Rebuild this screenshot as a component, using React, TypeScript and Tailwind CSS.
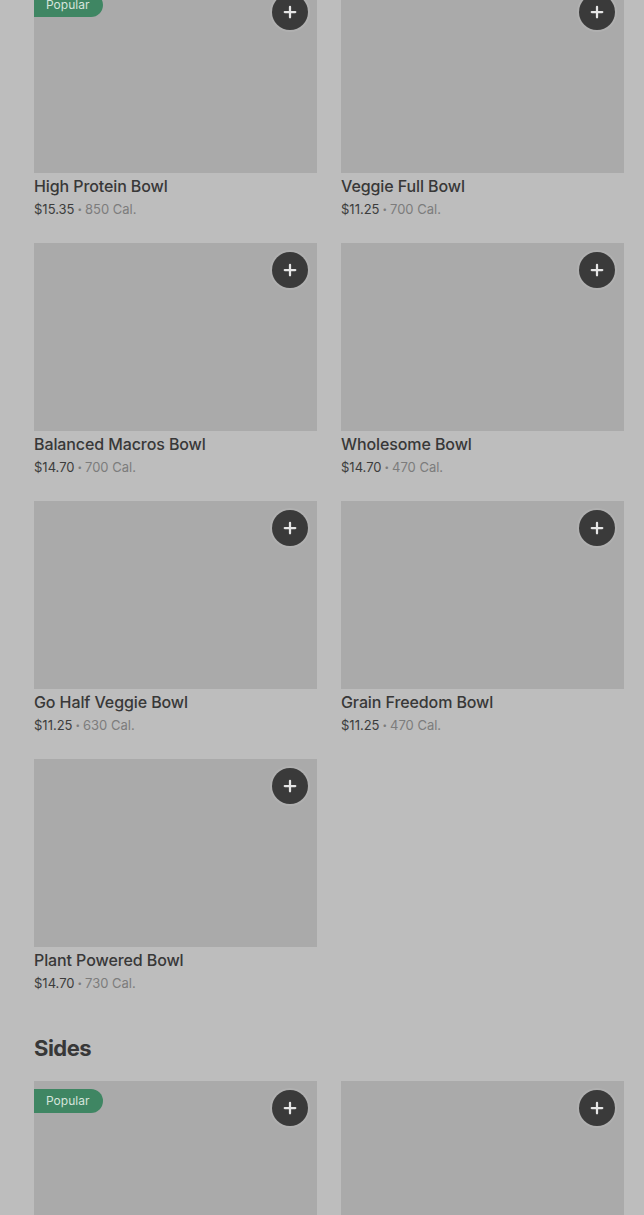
import { Plus } from "lucide-react"

const bowls = [
    { name: "High Protein Bowl", price: "$15.35", cal: "850 Cal.", popular: true },
    { name: "Veggie Full Bowl", price: "$11.25", cal: "700 Cal.", popular: false },
    { name: "Balanced Macros Bowl", price: "$14.70", cal: "700 Cal.", popular: false },
    { name: "Wholesome Bowl", price: "$14.70", cal: "470 Cal.", popular: false },
    { name: "Go Half Veggie Bowl", price: "$11.25", cal: "630 Cal.", popular: false },
    { name: "Grain Freedom Bowl", price: "$11.25", cal: "470 Cal.", popular: false },
    { name: "Plant Powered Bowl", price: "$14.70", cal: "730 Cal.", popular: false },
]

const sides = [
    { name: "", price: "", cal: "", popular: true },
    { name: "", price: "", cal: "", popular: false },
]

type Item = { name: string; price: string; cal: string; popular: boolean }

function ItemCard({ item }: { item: Item }) {
    return (
        <div>
            <div className="relative h-[188px] bg-[#aaaaaa]">
                {item.popular && (
                    <span className="absolute left-0 top-[8px] flex h-[24px] items-center rounded-r-full bg-[#3f8663] pl-[12px] pr-[14px] text-[12px] text-[#d6e4dc]">
                        Popular
                    </span>
                )}
                <button className="absolute right-[9px] top-[9px] flex h-[36px] w-[36px] items-center justify-center rounded-full bg-[#3a3a3a] text-[#e6e6e6] shadow-[0_0_0_2px_rgba(255,255,255,0.08)]">
                    <Plus size={18} strokeWidth={3} />
                </button>
            </div>
            {item.name && (
                <div className="mt-[4px]">
                    <p className="text-[16px] leading-[18px] font-medium tracking-[-0.1px] text-[#383838]">{item.name}</p>
                    <p className="mt-[5px] flex items-center text-[13px] leading-[18px] text-[#7c7c7c]">
                        <span className="text-[#3c3c3c]">{item.price}</span>
                        <span className="mx-[3px] text-[8px]">•</span>
                        <span>{item.cal}</span>
                    </p>
                </div>
            )}
        </div>
    )
}

export default function App() {
    return (
        <div className="h-[1215px] overflow-hidden bg-[#bdbdbd] font-['Inter',sans-serif]">
            <div className="-mt-[15px] pl-[34px]">
                <div className="grid grid-cols-[283px_283px] gap-x-[24px] gap-y-[25px]">
                    {bowls.map((item) => (
                        <ItemCard key={item.name} item={item} />
                    ))}
                </div>

                <h2 className="mt-[42px] text-[22px] leading-[28px] font-bold tracking-[-0.5px] text-[#383838]">Sides</h2>

                <div className="mt-[19px] grid grid-cols-[283px_283px] gap-x-[24px]">
                    {sides.map((item, i) => (
                        <ItemCard key={i} item={item} />
                    ))}
                </div>
            </div>
        </div>
    )
}
